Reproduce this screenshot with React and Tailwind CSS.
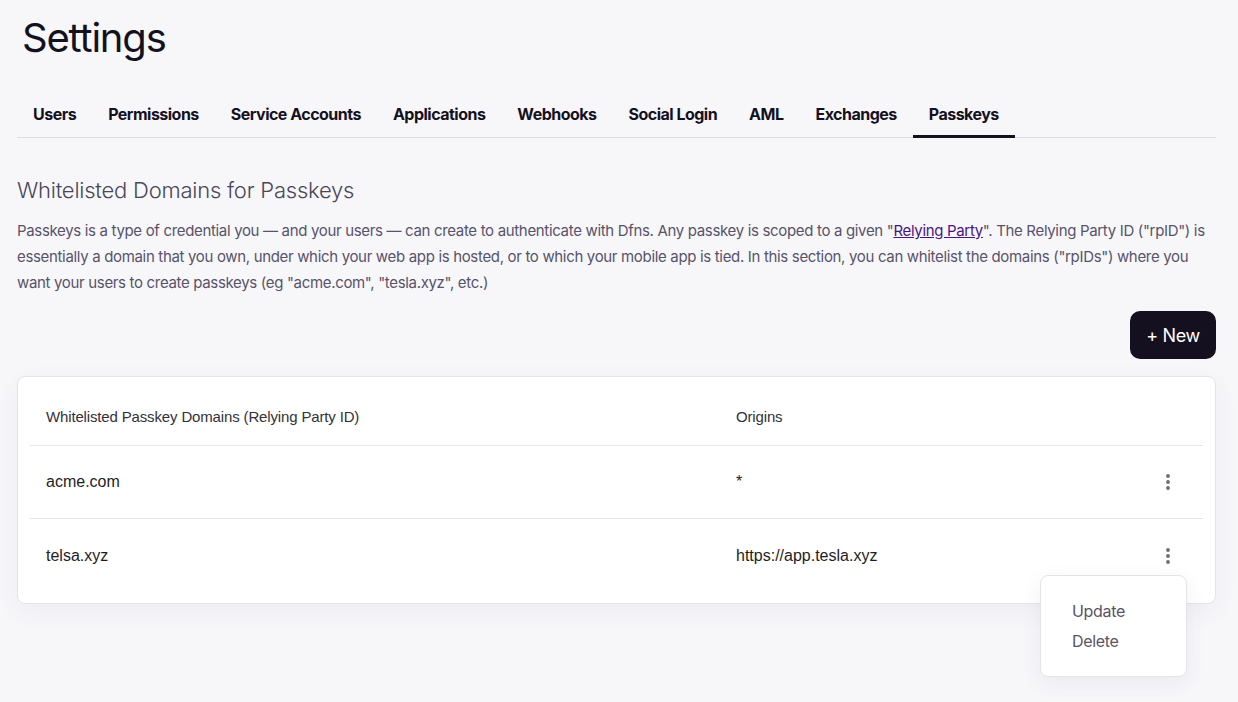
const tabs = ["Users", "Permissions", "Service Accounts", "Applications", "Webhooks", "Social Login", "AML", "Exchanges", "Passkeys"];

const rows = [
  { domain: "acme.com", origin: "*" },
  { domain: "telsa.xyz", origin: "https://app.tesla.xyz", open: true },
];

function Kebab() {
  return (
    <svg width="4" height="16" viewBox="0 0 4 16" className="text-[#6b6b73]">
      <circle cx="2" cy="2" r="1.9" fill="currentColor" />
      <circle cx="2" cy="8" r="1.9" fill="currentColor" />
      <circle cx="2" cy="14" r="1.9" fill="currentColor" />
    </svg>
  );
}

export default function App() {
  return (
    <div className="min-h-[702px] bg-[#f7f7fa] pl-[17px] pr-[22px] pt-[14px] font-['Inter',sans-serif] text-[#14111f]">
      <h1 className="pl-[5px] text-[40px] leading-[48px] tracking-[-0.03em] font-normal">Settings</h1>

      <div className="mt-[41px] flex border-b border-[#dcdce2]">
        {tabs.map((t) => (
          <div key={t}
            className={`px-4 pb-[10px] text-[16px] leading-[22px] font-bold tracking-[-0.032em] -mb-px border-b-[3px] ${t === "Passkeys" ? "border-[#14111f]" : "border-transparent"}`}>
            {t}
          </div>
        ))}
      </div>

      <h2 className="mt-[38px] text-[22px] leading-[28px] font-light tracking-[-0.01em] text-[#4a4658]">Whitelisted Domains for Passkeys</h2>
      <p className="mt-[14px] text-[15px] leading-[26px] tracking-[-0.022em] text-[#57536a]">
        Passkeys is a type of credential you — and your users — can create to authenticate with Dfns. Any passkey is scoped to a given "<a className="text-[#4b1580] underline">Relying Party</a>". The Relying Party ID ("rpID") is<br />
        essentially a domain that you own, under which your web app is hosted, or to which your mobile app is tied. In this section, you can whitelist the domains ("rpIDs") where you<br />
        want your users to create passkeys (eg "acme.com", "tesla.xyz", etc.)
      </p>

      <div className="mt-[15px] flex justify-end">
        <button className="h-[48px] w-[86px] rounded-[10px] bg-[#15101f] text-[18px] tracking-[-0.02em] text-white">+ New</button>
      </div>

      <div className="mt-[17px] rounded-[8px] border border-[#e3e3ea] bg-white px-[12px] pb-[11px] shadow-[0_8px_24px_rgba(80,80,120,0.06)] font-['Liberation_Sans',Arial,sans-serif]">
        <div className="flex h-[69px] items-start border-b border-[#e6e6ea] pl-[16px] pt-[29px] text-[15px] leading-[22px] tracking-[-0.01em] text-[#33313a]">
          <div className="w-[690px]">Whitelisted Passkey Domains (Relying Party ID)</div>
          <div>Origins</div>
        </div>
        {rows.map((r, i) => (
          <div key={r.domain} className={`relative flex h-[73px] items-center pl-[16px] text-[16px] text-[#1f1d24] ${i === 0 ? "border-b border-[#e6e6ea]" : ""}`}>
            <div className="w-[690px]">{r.domain}</div>
            <div className="flex-1">{r.origin}</div>
            <div className="mr-[33px] flex items-center"><Kebab /></div>
            {r.open && (
              <div className="absolute right-[16px] top-[56px] z-10 w-[147px] rounded-[8px] border border-[#e3e3ea] bg-white px-[31px] py-[20px] shadow-[0_6px_20px_rgba(80,80,120,0.08)] font-['Inter',sans-serif]">
                <div className="text-[16px] leading-[30px] tracking-[-0.02em] text-[#5a5466]">Update</div>
                <div className="text-[16px] leading-[30px] tracking-[-0.02em] text-[#5a5466]">Delete</div>
              </div>
            )}
          </div>
        ))}
      </div>
    </div>
  );
}
